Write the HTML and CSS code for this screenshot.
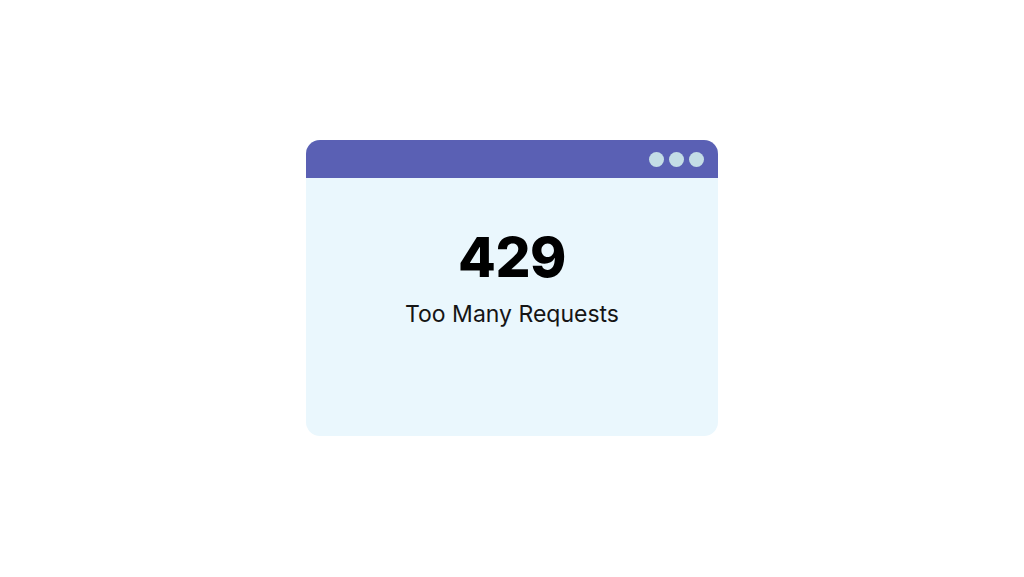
FILE: index.html
```html
<!DOCTYPE html>
<html>
<head>
<meta charset="utf-8">
<link rel="stylesheet" href="styles.css">
</head>
<body>
<div class="page">
  <div class="window">
    <div class="titlebar">
      <span class="dot"></span><span class="dot"></span><span class="dot"></span>
    </div>
    <div class="content">
      <div class="code">429</div>
      <div class="message">Too Many Requests</div>
    </div>
  </div>
</div>
</body>
</html>
```
FILE: styles.css
```css
html, body {
  margin: 0;
  padding: 0;
  background: #ffffff;
}
.page {
  width: 1024px;
  height: 577px;
  display: flex;
  align-items: center;
  justify-content: center;
}
.window {
  width: 412px;
  height: 296px;
  border-radius: 14px;
  overflow: hidden;
  background: #eaf7fd;
  display: flex;
  flex-direction: column;
  margin-top: -1px;
}
.titlebar {
  height: 38px;
  background: #5a60b4;
  display: flex;
  align-items: center;
  justify-content: flex-end;
  gap: 5px;
  padding-right: 14px;
}
.dot {
  width: 15px;
  height: 15px;
  border-radius: 50%;
  background: #c4dde6;
}
.content {
  display: flex;
  flex-direction: column;
  align-items: center;
  padding-top: 49px;
  font-family: Inter, "Noto Sans", sans-serif;
  color: #000;
}
.code {
  font-size: 55px;
  font-weight: 800;
  line-height: 60px;
  letter-spacing: -0.5px;
}
.message {
  font-size: 23px;
  font-weight: 400;
  line-height: 28px;
  margin-top: 13px;
  color: #151515;
}
```
